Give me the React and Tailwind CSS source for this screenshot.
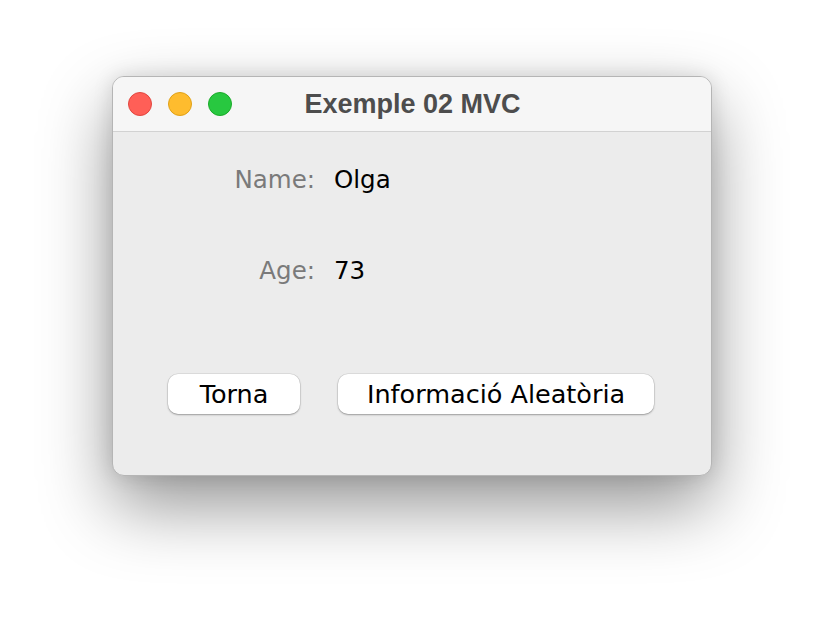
export default function App() {
  return (
    <div className="w-[824px] h-[624px] bg-white overflow-hidden">
      <div className="ml-[112px] mt-[76px] w-[600px] h-[400px] rounded-[12px] bg-[#ececec] border border-[#b5b5b5] shadow-[0_30px_70px_rgba(0,0,0,0.42),0_0_20px_rgba(0,0,0,0.12)] overflow-hidden flex flex-col">
        <div className="h-[55px] bg-[#f6f6f6] border-b border-[#d2d2d2] flex items-center relative shrink-0">
          <div className="flex gap-[16px] pl-[15px]">
            <div className="w-[24px] h-[24px] rounded-full bg-[#ff5f57] border border-[#e2463f]" />
            <div className="w-[24px] h-[24px] rounded-full bg-[#febc2e] border border-[#e1a116]" />
            <div className="w-[24px] h-[24px] rounded-full bg-[#28c840] border border-[#1aab29]" />
          </div>
          <div className="absolute inset-0 flex items-center justify-center text-[#4d4d4d] font-bold text-[27px] pl-[1px]" style={{ fontFamily: '"Liberation Sans", Arial, sans-serif' }}>
            Exemple 02 MVC
          </div>
        </div>
        <div className="flex flex-col pt-[32px]" style={{ fontFamily: '"DejaVu Sans", sans-serif' }}>
          <div className="flex items-center h-[32px] text-[24.5px]">
            <div className="w-[202px] text-right text-[#7a7a7a]">Name:</div>
            <div className="ml-[19px] text-black">Olga</div>
          </div>
          <div className="flex items-center h-[32px] text-[24.5px] mt-[59px]">
            <div className="w-[202px] text-right text-[#7a7a7a]">Age:</div>
            <div className="ml-[19px] text-black">73</div>
          </div>
          <div className="flex mt-[87px] pl-[55px] gap-[38px]">
            <div className="w-[132px] h-[40px] rounded-[10px] bg-white shadow-[0_1px_2px_rgba(0,0,0,0.3),0_0_0_0.5px_rgba(0,0,0,0.12)] flex items-center justify-center text-[25.5px] text-black">Torna</div>
            <div className="w-[316px] h-[40px] rounded-[10px] bg-white shadow-[0_1px_2px_rgba(0,0,0,0.3),0_0_0_0.5px_rgba(0,0,0,0.12)] flex items-center justify-center text-[25.5px] text-black">Informació Aleatòria</div>
          </div>
        </div>
      </div>
    </div>
  );
}
